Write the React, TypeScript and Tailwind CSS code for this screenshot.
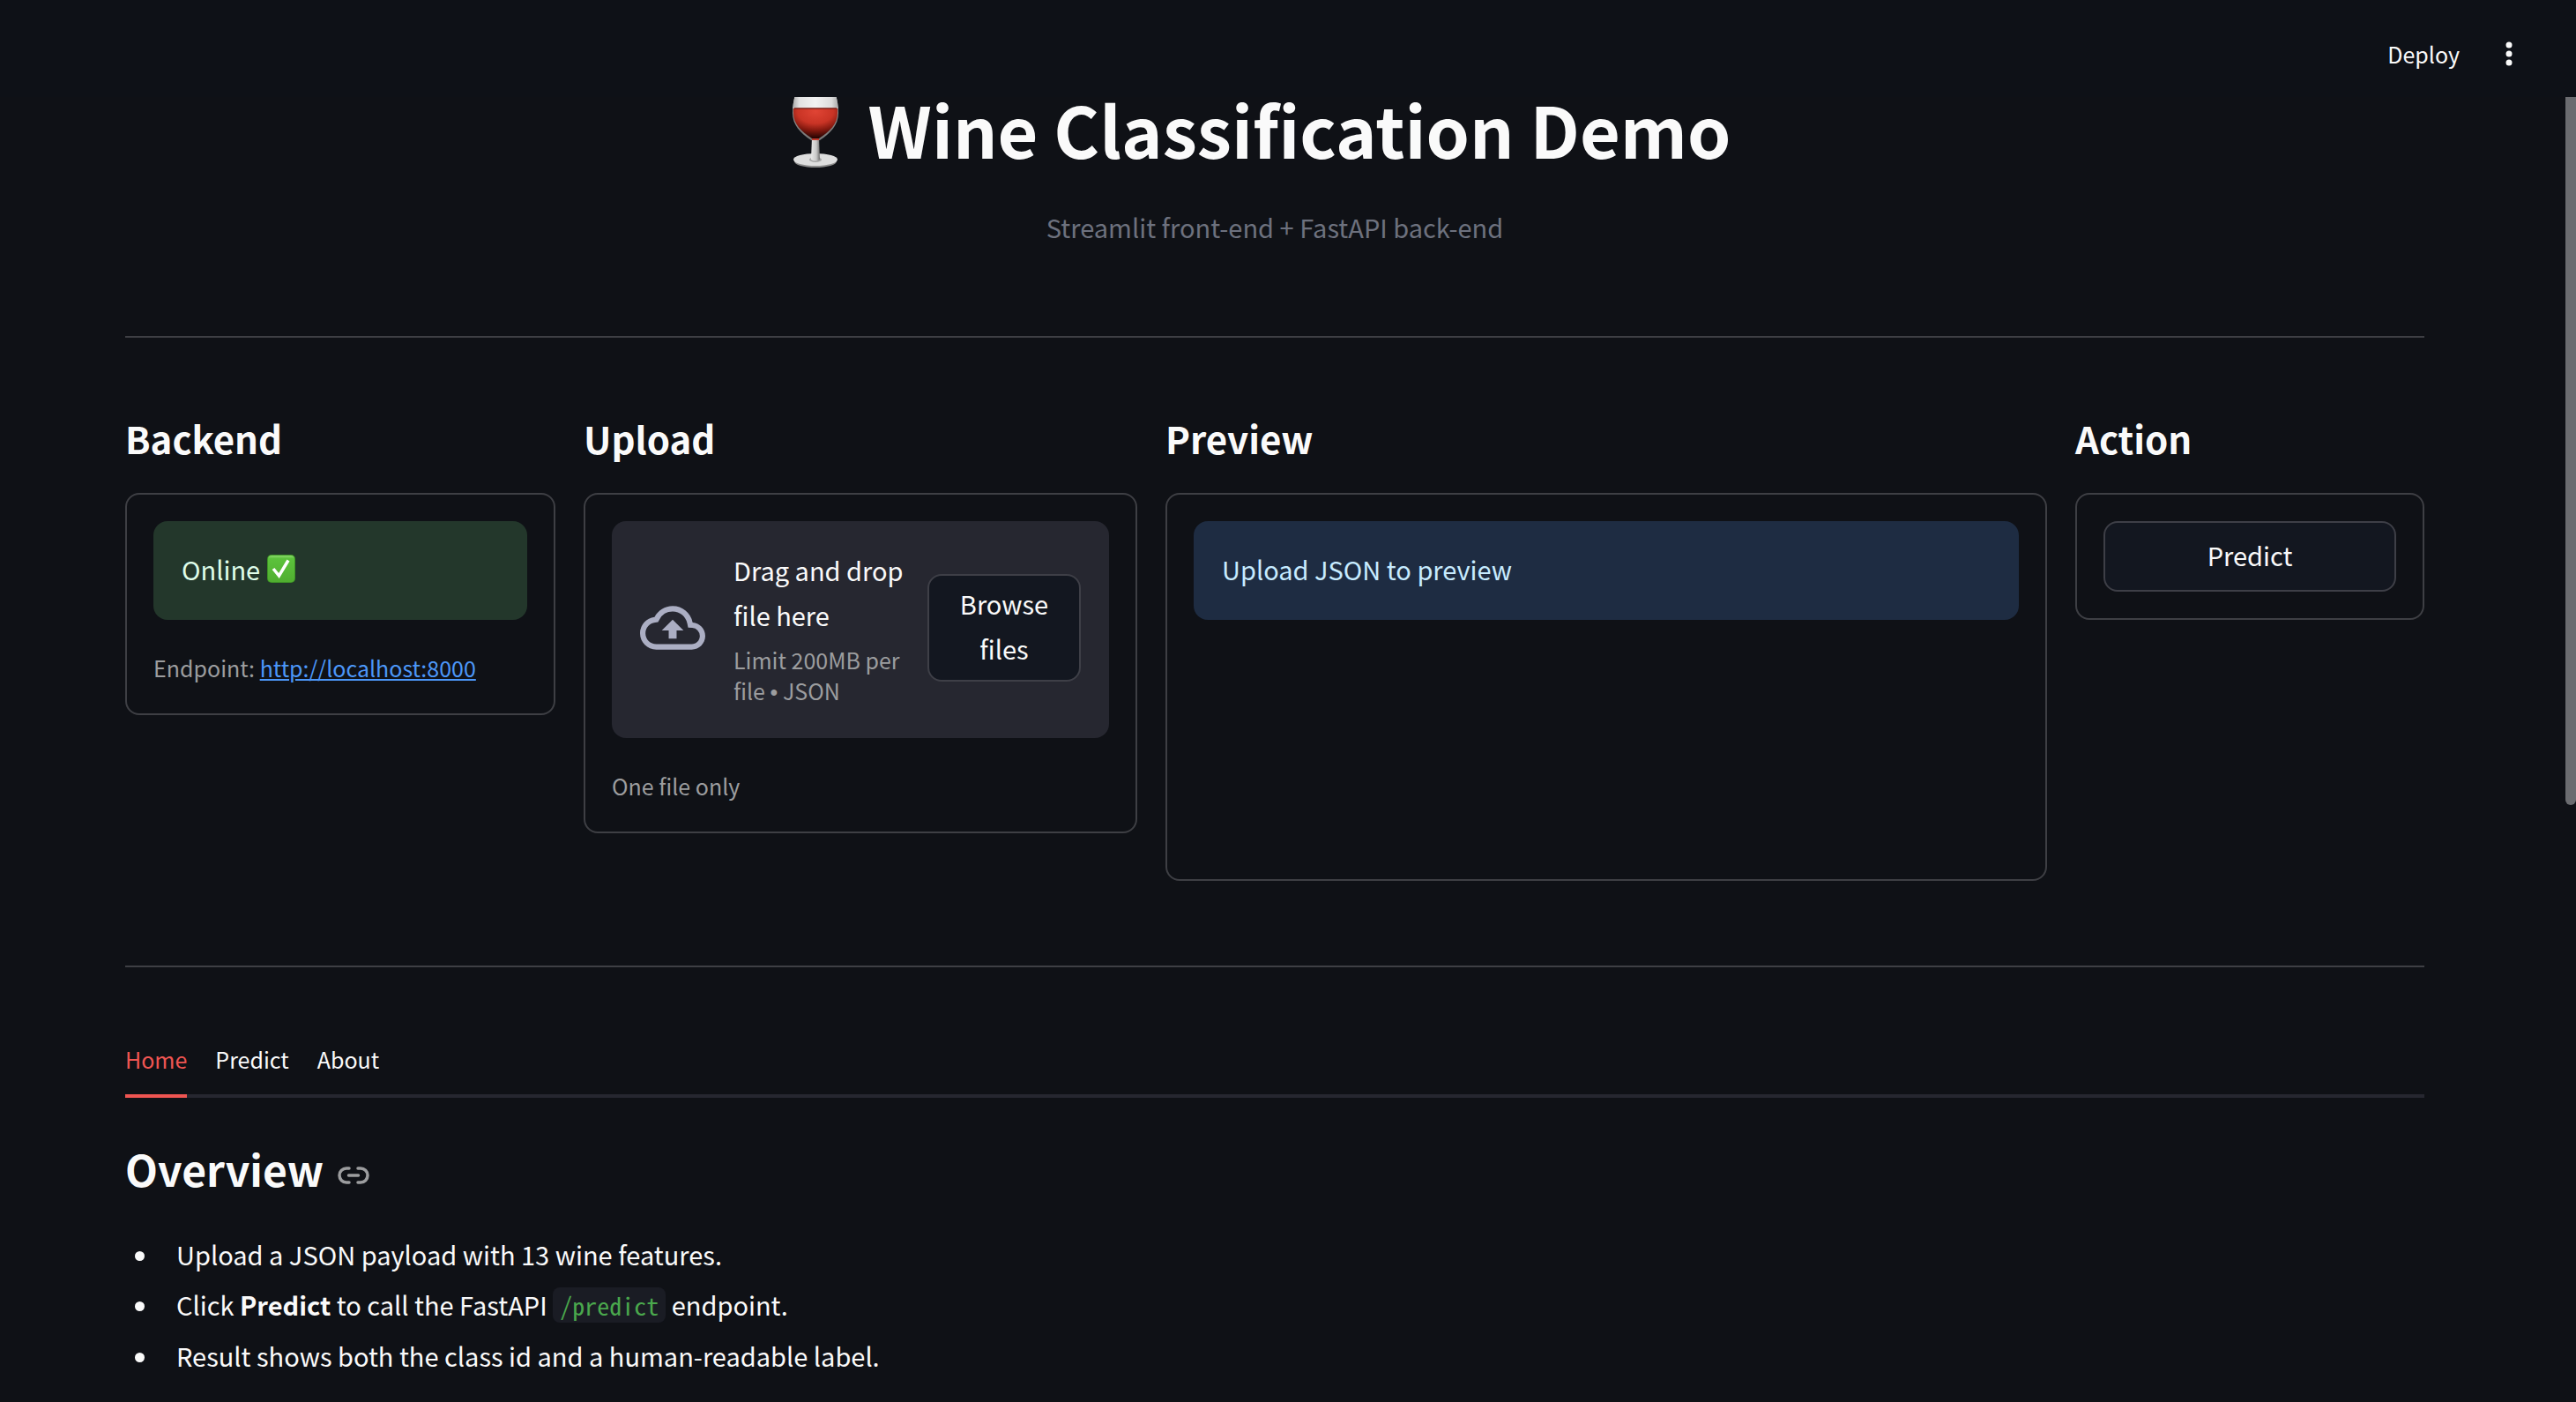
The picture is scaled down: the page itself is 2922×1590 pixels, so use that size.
import React from "react";

const card = "rounded-2xl border-2 border-[#3e3f44] p-[30px]";
const alert = "rounded-2xl px-8 pt-7 pb-8 leading-[52px]";
const caption = "text-[25px] leading-[44px] text-[#9c9d9f]";

function WineGlass() {
  return (
    <svg className="h-[88px] w-[88px] shrink-0" viewBox="0 0 88 88" role="img" aria-label="Wine glass">
      <defs>
        <linearGradient id="glass" x1="0" x2="1" y1="0" y2="0">
          <stop offset="0" stopColor="#a9a9a9" />
          <stop offset="0.15" stopColor="#e2e2e2" />
          <stop offset="0.5" stopColor="#f2f2f2" />
          <stop offset="0.85" stopColor="#dcdcdc" />
          <stop offset="1" stopColor="#a9a9a9" />
        </linearGradient>
        <linearGradient id="bowl" x1="0" x2="0" y1="0" y2="1">
          <stop offset="0" stopColor="#d0d0d0" />
          <stop offset="0.4" stopColor="#8d8d8d" />
          <stop offset="1" stopColor="#777" />
        </linearGradient>
        <radialGradient id="wine" cx="0.5" cy="0.1" r="0.9">
          <stop offset="0" stopColor="#e04434" />
          <stop offset="0.45" stopColor="#c93425" />
          <stop offset="0.7" stopColor="#84190f" />
          <stop offset="1" stopColor="#1f0301" />
        </radialGradient>
        <linearGradient id="stem" x1="0" x2="1" y1="0" y2="0">
          <stop offset="0" stopColor="#e8e8e8" />
          <stop offset="0.6" stopColor="#c8c8c8" />
          <stop offset="1" stopColor="#6e6e6e" />
        </linearGradient>
      </defs>
      <ellipse cx="44" cy="81" rx="24" ry="7" fill="#8c8c8c" />
      <ellipse cx="44" cy="79" rx="25" ry="7" fill="#dedede" />
      <ellipse cx="44" cy="79" rx="7" ry="3" fill="#a8a8a8" />
      <path d="M40 54h8l1 25q-5 3-10 0z" fill="url(#stem)" />
      <path d="M22 2h44q4 13 4 24c0 14-9 23-21 31H39C27 49 18 40 18 26Q18 15 22 2z" fill="url(#bowl)" />
      <path d="M22 2h44q3 9 4 19H18q1-10 4-19z" fill="url(#glass)" />
      <path d="M19 21h50v5c0 13-9 21-21 29h-8C28 47 19 39 19 26z" fill="url(#wine)" />
      <path d="M20 21h48" stroke="#7b2018" strokeWidth="1.5" />
      <path d="M40 56h8" stroke="#c2382b" strokeWidth="2" />
    </svg>
  );
}

function CheckMark() {
  return (
    <svg className="h-8 w-8 shrink-0" viewBox="0 0 32 32" role="img" aria-label="OK">
      <defs>
        <linearGradient id="check" x1="0" x2="0" y1="0" y2="1">
          <stop offset="0" stopColor="#8ada6c" />
          <stop offset="0.12" stopColor="#5cc23c" />
          <stop offset="1" stopColor="#50ae30" />
        </linearGradient>
      </defs>
      <rect width="32" height="32" rx="5" fill="#3d9325" />
      <rect x="1" y="1" width="30" height="30" rx="4" fill="url(#check)" />
      <path d="M7 16l6.500 8L24 6.500" fill="none" stroke="#fff" strokeWidth="3.500" />
    </svg>
  );
}

function Column({ title, children }: { title: string; children: React.ReactNode }) {
  return (
    <section className="min-w-0">
      <h3 className="mb-8 text-[42px] leading-[60px] font-bold">{title}</h3>
      {children}
    </section>
  );
}

export default function App() {
  return (
    <div className="relative h-screen overflow-hidden bg-[#0f1116] font-['Noto_Sans_CJK_SC',sans-serif] text-[29px] leading-[51px] text-[#fafafa]">
      <header className="relative z-10 flex h-[110px] items-center justify-end gap-10 bg-[#0e1117] pt-3 pr-[60px]">
        <button className="text-[25px]">Deploy</button>
        <button aria-label="Menu" className="flex h-10 w-8 items-center justify-center">
          <svg className="h-10 w-8" viewBox="0 0 32 40" fill="#fafafa">
            <circle cx="16" cy="10" r="3.5" />
            <circle cx="16" cy="20" r="3.5" />
            <circle cx="16" cy="30" r="3.5" />
          </svg>
        </button>
      </header>
      <div aria-hidden="true" className="absolute top-[110px] right-0 h-[803px] w-3 rounded-b-full bg-[#6b6c70]" />
      <main className="pr-[172px] pl-[142px]">
        <div className="-mt-2 flex items-center justify-center gap-4 pr-12">
          <WineGlass />
          <h1 className="text-[79px] leading-[82px] font-bold">Wine Classification Demo</h1>
        </div>
        <p className="mt-[42px] text-center text-[#6d717e]">Streamlit front-end + FastAPI back-end</p>
        <hr className="mt-[98px] border-t-2 border-[#3e3f44]" />

        <div className="mt-[84px] grid grid-cols-[488fr_628fr_1000fr_396fr] items-start gap-8">
          <Column title="Backend">
            <div className={card}>
              <div role="status" className={`flex items-center gap-2 bg-[#23372b] text-[#dffde9] ${alert}`}>
                Online <CheckMark />
              </div>
              <p className={`mt-8 ${caption}`}>
                Endpoint: <a href="http://localhost:8000" className="text-[#4c97f8] underline">http://localhost:8000</a>
              </p>
            </div>
          </Column>
          <Column title="Upload">
            <div className={card}>
              <div className="flex items-center rounded-2xl bg-[#262730] px-8 pt-[30px] pb-[34px]">
                <svg className="mr-8 h-[74px] w-[74px] shrink-0" viewBox="0 0 24 24" fill="#abaec3">
                  <path d="M19.35 10.04A7.49 7.49 0 0 0 12 4C9.11 4 6.6 5.64 5.35 8.04A5.994 5.994 0 0 0 0 14c0 3.31 2.69 6 6 6h13c2.76 0 5-2.24 5-5 0-2.64-2.05-4.78-4.65-4.96zM19 18H6c-2.21 0-4-1.79-4-4 0-2.05 1.53-3.76 3.56-3.97l1.07-.11.5-.95A5.469 5.469 0 0 1 12 6c2.62 0 4.88 1.86 5.39 4.43l.3 1.5 1.53.11A2.98 2.98 0 0 1 22 15c0 1.65-1.35 3-3 3zM8 13h2.55v3h2.9v-3H16l-4-4z" />
                </svg>
                <div className="min-w-0 flex-1">
                  <p>Drag and drop file here</p>
                  <p className="mt-2 text-[25px] leading-[35px] text-[#9c9d9f]">
                    Limit 200MB per file <span className="font-['Liberation_Sans',sans-serif]">•</span> JSON
                  </p>
                </div>
                <button className="ml-6 w-[174px] shrink-0 rounded-2xl border-2 border-[#3e3f47] bg-[#131720] px-6 pt-[6px] pb-[10px]">Browse files</button>
              </div>
              <p className={`mt-8 ${caption}`}>One file only</p>
            </div>
          </Column>
          <Column title="Preview">
            <div className={`min-h-[440px] ${card}`}>
              <div role="status" className={`bg-[#1e2c42] text-[#c7ebff] ${alert}`}>Upload JSON to preview</div>
            </div>
          </Column>
          <Column title="Action">
            <div className={card}>
              <button className="flex h-20 w-full items-center justify-center rounded-2xl border-2 border-[#3e3f47] bg-[#131720] pb-1">Predict</button>
            </div>
          </Column>
        </div>

        <hr className="mt-24 border-t-2 border-[#3e3f44]" />
        <div role="tablist" className="mt-16 flex gap-8 border-b-4 border-[#262730] text-[25px]">
          <button role="tab" aria-selected="true" className="-mb-1 h-[84px] border-b-4 border-[#ef5552] text-[#ef5552]">Home</button>
          <button role="tab" aria-selected="false" className="h-20">Predict</button>
          <button role="tab" aria-selected="false" className="h-20">About</button>
        </div>

        <section className="mt-[46px]">
          <div className="flex items-center gap-4">
            <h2 className="text-[48px] leading-[68px] font-bold">Overview</h2>
            <a href="#overview" aria-label="Link to Overview" className="pt-4">
              <svg className="h-5 w-9" viewBox="0 0 36 20" fill="none" stroke="#9c9d9f" strokeWidth="3.500" strokeLinecap="round">
                <path d="M13 2h-3a8 8 0 0 0 0 16h3M23 2h3a8 8 0 0 1 0 16h-3M12.500 10h11" />
              </svg>
            </a>
          </div>
          <ul className="mt-[38px] list-disc space-y-[6px] pl-10">
            <li className="pl-[18px]">Upload a JSON payload with 13 wine features.</li>
            <li className="pl-[18px]">
              Click <strong>Predict</strong> to call the FastAPI{" "}
              <code className="rounded-lg bg-[#1a1c24] px-2 font-['Noto_Sans_Mono_CJK_SC',monospace] text-[28px] text-[#4aa84d]">/predict</code> endpoint.
            </li>
            <li className="pl-[18px]">Result shows both the class id and a human-readable label.</li>
          </ul>
        </section>
      </main>
    </div>
  );
}
